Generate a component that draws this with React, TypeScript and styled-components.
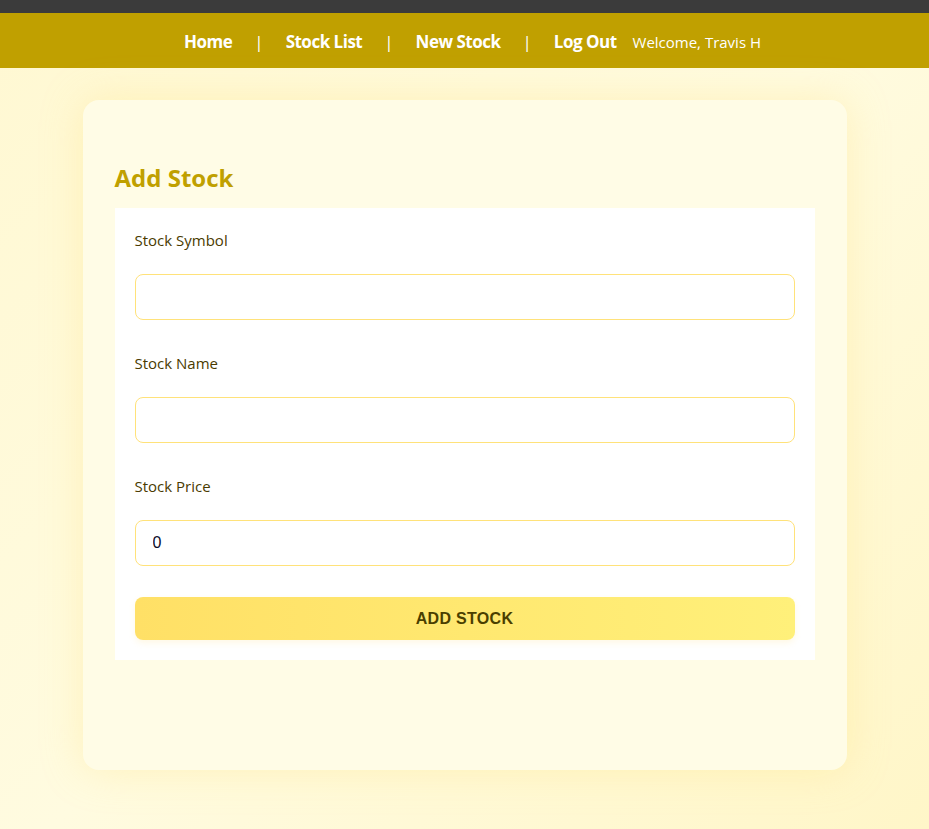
import React from "react";
import styled, { createGlobalStyle } from "styled-components";

const GlobalStyle = createGlobalStyle`
  html, body {
    margin: 0;
    padding: 0;
  }
  body {
    font-family: "Open Sans", "Noto Sans", sans-serif;
    background: linear-gradient(135deg, #fff8d2 0%, #fffbe0 50%, #fff6c8 100%);
    min-height: 829px;
  }
`;

const TopStrip = styled.div`
  height: 13px;
  background-color: #3b3b3b;
`;

const NavBar = styled.nav`
  height: 55px;
  box-sizing: border-box;
  padding: 2px 0 0 16px;
  background-color: #c0a000;
  display: flex;
  align-items: center;
  justify-content: center;
  color: #ffffff;
`;

const NavLink = styled.a`
  font-size: 17px;
  font-weight: 700;
  letter-spacing: -0.5px;
  color: #ffffff;
  text-decoration: none;
`;

const Divider = styled.span`
  font-size: 17px;
  margin: 0 22px;
`;

const Welcome = styled.span`
  font-size: 15px;
  margin-left: 16px;
`;

const Main = styled.main`
  display: flex;
  justify-content: center;
  padding-top: 32px;
`;

const Card = styled.section`
  width: 764px;
  box-sizing: border-box;
  padding: 32px 32px 110px;
  background-color: #fffce6;
  border-radius: 16px;
  box-shadow: 0 0 40px rgba(255, 226, 120, 0.35);
`;

const Title = styled.h2`
  margin: 30px 0 14px;
  font-size: 24px;
  line-height: 32px;
  font-weight: 700;
  color: #c0a000;
`;

const Form = styled.form`
  background-color: #ffffff;
  padding: 20px;
`;

const Field = styled.div`
  margin-bottom: 31px;
`;

const Label = styled.label`
  display: block;
  font-size: 15px;
  line-height: 24px;
  color: #4a3b00;
  margin-bottom: 22px;
`;

const Input = styled.input`
  display: block;
  width: 100%;
  height: 46px;
  box-sizing: border-box;
  border: 1px solid #ffe27a;
  border-radius: 8px;
  padding: 0 17px;
  font-family: "Liberation Sans", Arial, sans-serif;
  font-size: 16px;
  color: #0a0a2a;
  background: #ffffff;
  outline: none;
`;

const SubmitButton = styled.button`
  display: block;
  width: 100%;
  height: 43px;
  border: none;
  border-radius: 8px;
  background: linear-gradient(90deg, #ffe066 0%, #fff07a 100%);
  box-shadow: 0 3px 6px rgba(255, 210, 80, 0.15);
  font-family: "Liberation Sans", Arial, sans-serif;
  font-size: 16px;
  font-weight: 700;
  letter-spacing: 0.3px;
  color: #4a3f00;
  cursor: pointer;
`;

const fields = [
  { id: "symbol", label: "Stock Symbol", value: "" },
  { id: "name", label: "Stock Name", value: "" },
  { id: "price", label: "Stock Price", value: "0" },
];

export default function App() {
  return (
    <>
      <GlobalStyle />
      <TopStrip />
      <NavBar>
        <NavLink href="#">Home</NavLink>
        <Divider>|</Divider>
        <NavLink href="#">Stock List</NavLink>
        <Divider>|</Divider>
        <NavLink href="#">New Stock</NavLink>
        <Divider>|</Divider>
        <NavLink href="#">Log Out</NavLink>
        <Welcome>Welcome, Travis H</Welcome>
      </NavBar>
      <Main>
        <Card>
          <Title>Add Stock</Title>
          <Form onSubmit={(e) => e.preventDefault()}>
            {fields.map((field) => (
              <Field key={field.id}>
                <Label htmlFor={field.id}>{field.label}</Label>
                <Input id={field.id} defaultValue={field.value} />
              </Field>
            ))}
            <SubmitButton type="submit">ADD STOCK</SubmitButton>
          </Form>
        </Card>
      </Main>
    </>
  );
}
